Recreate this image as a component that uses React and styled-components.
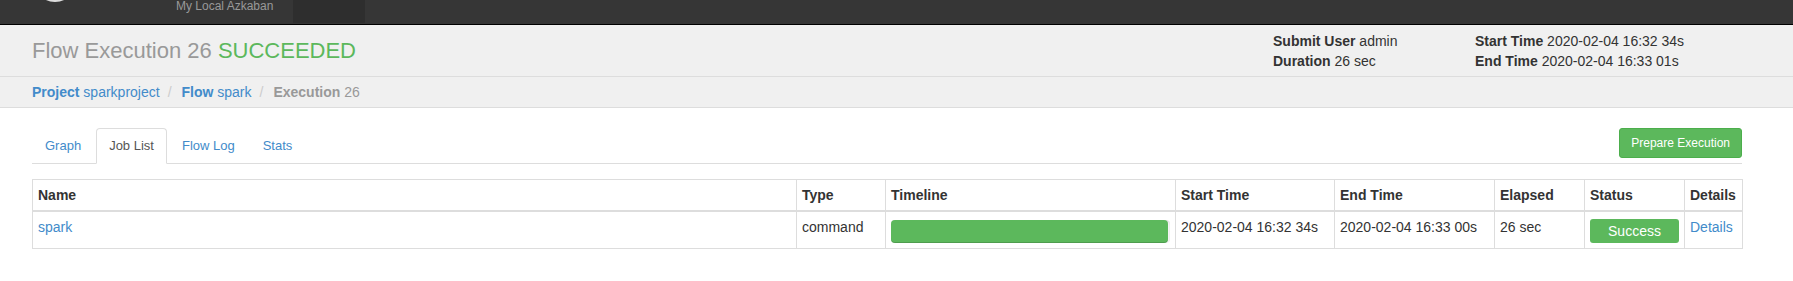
import styled, { createGlobalStyle } from "styled-components";

const GlobalStyle = createGlobalStyle`
  body {
    margin: 0;
    background: #fff;
    color: #333;
    font-family: "Liberation Sans", Arial, sans-serif;
    font-size: 14px;
    line-height: 20px;
  }
  a {
    color: #428bca;
    text-decoration: none;
  }
`;

const jobs = [
  {
    name: "spark",
    type: "command",
    progress: 99.3,
    start: "2020-02-04 16:32 34s",
    end: "2020-02-04 16:33 00s",
    elapsed: "26 sec",
    status: "Success",
  },
];

const columns = [
  { title: "Name", width: 764 },
  { title: "Type", width: 89 },
  { title: "Timeline", width: 290 },
  { title: "Start Time", width: 159 },
  { title: "End Time", width: 160 },
  { title: "Elapsed", width: 90 },
  { title: "Status", width: 100 },
  { title: "Details", width: 58 },
];

export default function App() {
  return (
    <>
      <GlobalStyle />
      <Nav>
        <Brand>
          <Logo viewBox="0 0 44 44">
            <circle cx="22" cy="22" r="20" fill="#222" stroke="#ddd" strokeWidth="2" />
          </Logo>
          <BrandSub>My Local Azkaban</BrandSub>
        </Brand>
        <NavMenu>
          <NavLink $active />
        </NavMenu>
      </Nav>

      <Header>
        <Title>
          Flow Execution 26 <Succeeded>SUCCEEDED</Succeeded>
        </Title>
        <Meta>
          <MetaItem>
            <b>Submit User</b> admin
          </MetaItem>
          <MetaItem>
            <b>Start Time</b> 2020-02-04 16:32 34s
          </MetaItem>
          <MetaItem>
            <b>Duration</b> 26 sec
          </MetaItem>
          <MetaItem>
            <b>End Time</b> 2020-02-04 16:33 01s
          </MetaItem>
        </Meta>
      </Header>

      <Breadcrumb>
        <Crumb href="#">
          <b>Project</b> sparkproject
        </Crumb>
        <Divider>/</Divider>
        <Crumb href="#">
          <b>Flow</b> spark
        </Crumb>
        <Divider>/</Divider>
        <CurrentCrumb>
          <b>Execution</b> 26
        </CurrentCrumb>
      </Breadcrumb>

      <Content>
        <TabBar>
          <Tabs>
            <Tab href="#">Graph</Tab>
            <Tab href="#" $active>
              Job List
            </Tab>
            <Tab href="#">Flow Log</Tab>
            <Tab href="#">Stats</Tab>
          </Tabs>
          <Button>Prepare Execution</Button>
        </TabBar>

        <Table>
          <colgroup>
            {columns.map((c) => (
              <col key={c.title} style={{ width: c.width }} />
            ))}
          </colgroup>
          <thead>
            <tr>
              {columns.map((c) => (
                <Th key={c.title}>{c.title}</Th>
              ))}
            </tr>
          </thead>
          <tbody>
            {jobs.map((job) => (
              <tr key={job.name}>
                <Td>
                  <a href="#">{job.name}</a>
                </Td>
                <Td>{job.type}</Td>
                <Td>
                  <Progress>
                    <ProgressBar style={{ width: `${job.progress}%` }} />
                  </Progress>
                </Td>
                <Td>{job.start}</Td>
                <Td>{job.end}</Td>
                <Td>{job.elapsed}</Td>
                <Td>
                  <Label>{job.status}</Label>
                </Td>
                <Td>
                  <a href="#">Details</a>
                </Td>
              </tr>
            ))}
          </tbody>
        </Table>
      </Content>
    </>
  );
}

const Nav = styled.div`
  display: flex;
  height: 24px;
  background: #363636;
  border-bottom: 1px solid #000;
  overflow: hidden;
  padding-left: 33px;
`;

const Brand = styled.div`
  display: flex;
  align-items: flex-start;
`;

const Logo = styled.svg`
  width: 44px;
  height: 44px;
  margin-top: -41px;
`;

const BrandSub = styled.div`
  margin-left: 99px;
  font-size: 12px;
  line-height: 12px;
  color: #999;
`;

const NavMenu = styled.div`
  display: flex;
  margin-left: 20px;
`;

const NavLink = styled.a`
  display: block;
  width: 72px;
  height: 23px;
  background: ${(p) => (p.$active ? "#2e2e2e" : "transparent")};
`;

const Header = styled.div`
  display: flex;
  align-items: center;
  justify-content: space-between;
  height: 51px;
  padding: 0 51px 0 32px;
  background: #f0f0f0;
  border-bottom: 1px solid #ddd;
`;

const Title = styled.h1`
  margin: 0;
  font-size: 22px;
  font-weight: normal;
  line-height: 26px;
  color: #999;
`;

const Succeeded = styled.span`
  color: #5cb85c;
`;

const Meta = styled.div`
  display: grid;
  grid-template-columns: 202px 267px;
`;

const MetaItem = styled.div`
  line-height: 20px;
  white-space: nowrap;
`;

const Breadcrumb = styled.div`
  display: flex;
  height: 30px;
  line-height: 30px;
  padding: 0 32px;
  background: #f0f0f0;
  border-bottom: 1px solid #ddd;
`;

const Crumb = styled.a``;

const CurrentCrumb = styled.span`
  color: #999;
`;

const Divider = styled.span`
  color: #ccc;
  padding: 0 10px 0 8px;
`;

const Content = styled.div`
  padding: 20px 51px 0 32px;
`;

const TabBar = styled.div`
  display: flex;
  align-items: flex-start;
  justify-content: space-between;
  border-bottom: 1px solid #ddd;
`;

const Tabs = styled.div`
  display: flex;
`;

const Tab = styled.a`
  display: block;
  margin: 0 2px -1px 0;
  padding: 9px 12px;
  font-size: 13px;
  line-height: 16px;
  border: 1px solid ${(p) => (p.$active ? "#ddd" : "transparent")};
  border-bottom-color: ${(p) => (p.$active ? "#fff" : "transparent")};
  border-radius: 4px 4px 0 0;
  background: ${(p) => (p.$active ? "#fff" : "transparent")};
  color: ${(p) => (p.$active ? "#555" : "#428bca")};
`;

const Button = styled.button`
  height: 30px;
  padding: 0 11px;
  font-family: inherit;
  font-size: 12px;
  line-height: 18px;
  color: #fff;
  background: #5cb85c;
  border: 1px solid #4cae4c;
  border-radius: 3px;
`;

const Table = styled.table`
  width: 1710px;
  margin-top: 15px;
  table-layout: fixed;
  border-collapse: collapse;
  border: 1px solid #ddd;
`;

const Th = styled.th`
  padding: 5px;
  text-align: left;
  font-weight: bold;
  line-height: 20px;
  border: 1px solid #ddd;
  border-bottom-width: 2px;
  white-space: nowrap;
`;

const Td = styled.td`
  padding: 5px;
  vertical-align: top;
  line-height: 20px;
  border: 1px solid #ddd;
  white-space: nowrap;
`;

const Progress = styled.div`
  height: 23px;
  margin-top: 3px;
  background: #f5f5f5;
  border-radius: 4px;
  box-shadow: inset 0 1px 2px rgba(0, 0, 0, 0.1);
`;

const ProgressBar = styled.div`
  height: 100%;
  background: #5cb85c;
  border-radius: 4px;
  box-shadow: inset 0 -1px 0 rgba(0, 0, 0, 0.15);
`;

const Label = styled.span`
  display: block;
  height: 24px;
  margin-top: 2px;
  line-height: 24px;
  text-align: center;
  color: #fff;
  background: #5cb85c;
  border-radius: 3px;
`;
